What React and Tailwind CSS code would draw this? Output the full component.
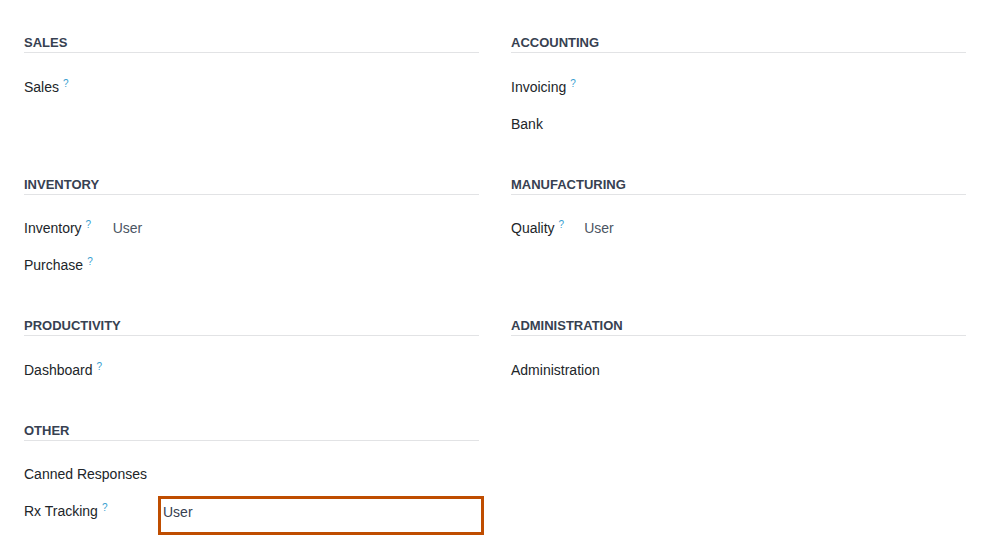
const sections = [
  [
    { title: 'SALES', rows: [{ label: 'Sales', help: true }] },
    { title: 'ACCOUNTING', rows: [{ label: 'Invoicing', help: true }, { label: 'Bank' }] },
  ],
  [
    { title: 'INVENTORY', rows: [{ label: 'Inventory', help: true, value: 'User' }, { label: 'Purchase', help: true }] },
    { title: 'MANUFACTURING', rows: [{ label: 'Quality', help: true, value: 'User' }] },
  ],
  [
    { title: 'PRODUCTIVITY', rows: [{ label: 'Dashboard', help: true }] },
    { title: 'ADMINISTRATION', rows: [{ label: 'Administration' }] },
  ],
  [
    { title: 'OTHER', rows: [{ label: 'Canned Responses' }, { label: 'Rx Tracking', help: true, value: 'User', focus: true }] },
    null,
  ],
];

function Group({ group }) {
  if (!group) return <div />;
  return (
    <div>
      <div className="h-[21px] border-b border-[#e2e3e5] text-[13px] font-bold leading-[21px] text-[#374151]">
        {group.title}
      </div>
      <div className="mt-[15.5px] grid grid-cols-[auto_1fr] items-start">
        {group.rows.map(r => (
          <div key={r.label} className="contents">
            <div className="whitespace-nowrap py-2 pr-[20px] text-[14px] leading-[21px] text-[#212529]">
              {r.label}
              {r.help && <sup className="ml-[4px] text-[10px] text-[#3aa0d0]">?</sup>}
            </div>
            {r.focus ? (
              <div className="-ml-[9px] mt-[3px] w-[326px] border-[3px] border-[#bf4d00] px-[2px] pt-[3px] pb-[9px] text-[14px] leading-[21px] text-[#374151]">
                {r.value}
              </div>
            ) : (
              <div className="py-2 text-[14px] leading-[21px] text-[#4b5563]">{r.value}</div>
            )}
          </div>
        ))}
      </div>
    </div>
  );
}

export default function App() {
  return (
    <div className="h-[546px] w-[990px] overflow-hidden bg-white px-6 pt-8 font-['Liberation_Sans',Arial,sans-serif]">
      <div className="flex flex-col gap-[31px]">
        {sections.map((pair, i) => (
          <div key={i} className="grid grid-cols-2 gap-x-8">
            <Group group={pair[0]} />
            <Group group={pair[1]} />
          </div>
        ))}
      </div>
    </div>
  );
}
